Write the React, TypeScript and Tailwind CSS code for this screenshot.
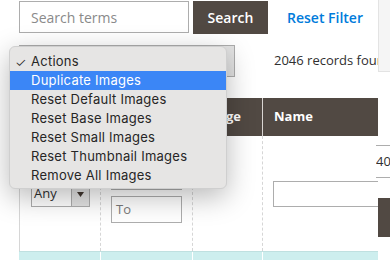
import React from "react";

const items = [
  "Duplicate Images",
  "Reset Default Images",
  "Reset Base Images",
  "Reset Small Images",
  "Reset Thumbnail Images",
  "Remove All Images",
];

export default function App() {
  return (
    <div className="relative flex w-[390px] h-[260px] overflow-hidden bg-white font-['Open_Sans',sans-serif] text-[#303030]">
      {/* Main column */}
      <div className="w-[378px] shrink-0 overflow-hidden">
        {/* Top search row */}
        <div className="flex items-start pt-[1px] pl-[19px] h-[34px]">
          <div className="shrink-0 w-[170px] h-[32px] border border-[#adadad] flex items-center pl-[11px] text-[14px] text-[#8a8a8a]">
            Search terms
          </div>
          <div className="shrink-0 ml-[4px] w-[75px] h-[33px] bg-[#514943] text-white font-semibold text-[14px] flex items-center justify-center">
            Search
          </div>
          <div className="shrink-0 ml-[19px] h-[33px] flex items-center text-[#007bdb] font-semibold text-[14px] whitespace-nowrap">
            Reset Filter
          </div>
        </div>

        {/* Actions row */}
        <div className="flex items-center mt-[11px] pl-[19px]">
          <div className="shrink-0 flex w-[216px] h-[32px] border border-[#adadad]">
            <div className="flex-1" />
            <div className="w-[32px] h-full bg-[#e3e3e3] border-l border-[#adadad]" />
          </div>
          <div className="shrink-0 ml-[39px] text-[13px] whitespace-nowrap">2046 records found</div>
        </div>

        {/* Header */}
        <div className="ml-[19px] mt-[21px] h-[38px] bg-[#514943] grid grid-cols-[81px_92px_70px_200px] text-white font-bold text-[13px]">
          <div />
          <div className="border-l border-[#8a837f]" />
          <div className="border-l border-[#8a837f] flex items-center pl-[8px]">Image</div>
          <div className="border-l border-[#d9d5d2] flex items-center pl-[11px]">Name</div>
        </div>

        {/* Filter row */}
        <div className="ml-[19px] h-[115px] border-l border-[#d6d6d6] grid grid-cols-[80px_92px_70px_200px]">
          <div className="pl-[11px] pt-[45px]">
            <div className="flex w-[59px] h-[26px] border border-[#adadad] text-[13px]">
              <div className="flex-1 flex items-center pl-[2px]">Any</div>
              <div className="w-[18px] h-full bg-[#e3e3e3] border-l border-[#adadad] flex items-center justify-center">
                <svg width="7" height="5" viewBox="0 0 7 5">
                  <path d="M0 0H7L3.5 5Z" fill="#41362f" />
                </svg>
              </div>
            </div>
          </div>
          <div className="border-l border-dashed border-[#d6d6d6] pl-[10px] pt-[27px]">
            <div className="w-[71px] h-[27px] border border-[#adadad]" />
            <div className="mt-[6px] w-[71px] h-[27px] border border-[#adadad] flex items-center pl-[4px] text-[13px] text-[#7a7a7a]">
              To
            </div>
          </div>
          <div className="border-l border-dashed border-[#d6d6d6]" />
          <div className="border-l border-dashed border-[#d6d6d6] pl-[10px] pt-[45px]">
            <div className="w-[140px] h-[26px] border border-[#adadad]" />
          </div>
        </div>

        {/* Cyan row */}
        <div className="ml-[19px] h-[9px] bg-[#cdeeee] border-t border-[#bfe0e0] grid grid-cols-[81px_92px_70px_200px]">
          <div />
          <div className="border-l border-white" />
          <div className="border-l border-white" />
          <div className="border-l border-white" />
        </div>
      </div>

      {/* Right overflow strip */}
      <div className="w-[12px] shrink-0 flex flex-col">
        <div className="h-[72px] bg-[#f5f5f5] border-l border-b border-[#e3e3e3]" />
        <div className="mt-[73px] h-[33px] border-t border-b border-[#adadad] flex items-center overflow-hidden text-[13px] -ml-[2px]">
          <span className="whitespace-nowrap">40</span>
        </div>
        <div className="mt-[20px] h-[39px] bg-[#514943]" />
      </div>

      {/* Native select popup menu */}
      <div className="absolute left-[9px] top-[46px] w-[218px] h-[143px] rounded-[6px] bg-[#e6e5e4] border border-[#cfcfcf] shadow-[0_8px_28px_rgba(0,0,0,0.28)] pt-[5px] font-['Inter',sans-serif] text-[13px] tracking-[0.25px] text-[#262626]">
        <div className="h-[19px] flex items-center relative pl-[21px]">
          <span className="absolute left-[5px] top-[1px] text-[13px] font-light">✓</span>
          Actions
        </div>
        {items.map((t, i) => (
          <div
            key={t}
            className={
              i === 0
                ? "h-[19px] flex items-center pl-[21px] bg-[#3b86f6] text-white"
                : "h-[19px] flex items-center pl-[21px]"
            }
          >
            {t}
          </div>
        ))}
      </div>
    </div>
  );
}
